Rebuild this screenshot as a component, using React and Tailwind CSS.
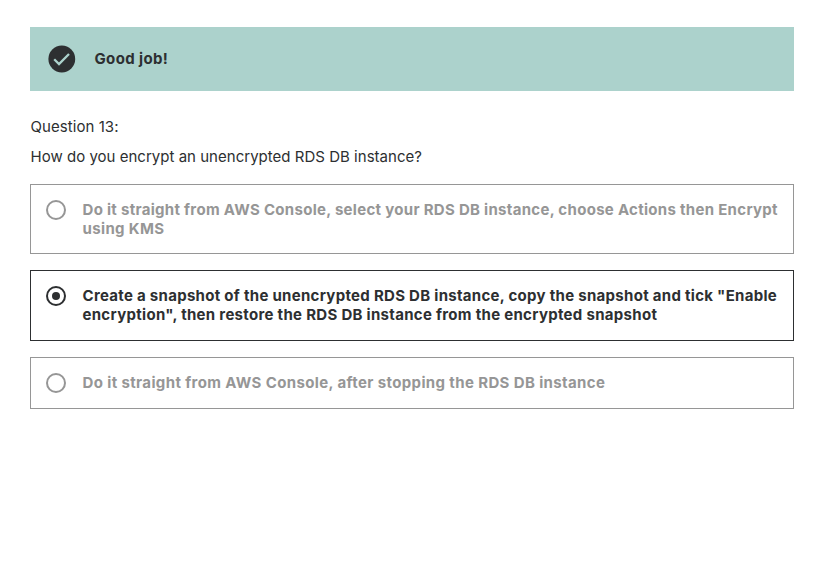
const OPTIONS = [
  {
    lines: [
      { text: "Do it straight from AWS Console, select your RDS DB instance, choose Actions then Encrypt", tracking: "tracking-[0.298px]" },
      { text: "using KMS", tracking: "tracking-[0.36px]" },
    ],
    selected: false,
  },
  {
    lines: [
      { text: 'Create a snapshot of the unencrypted RDS DB instance, copy the snapshot and tick "Enable', tracking: "tracking-[0.292px]" },
      { text: 'encryption", then restore the RDS DB instance from the encrypted snapshot', tracking: "tracking-[0.3px]" },
    ],
    selected: true,
  },
  {
    lines: [{ text: "Do it straight from AWS Console, after stopping the RDS DB instance", tracking: "tracking-[0.373px]" }],
    selected: false,
  },
];

function Radio({ selected }) {
  return (
    <svg className="h-5 w-5 shrink-0" viewBox="0 0 20 20" fill="none">
      <circle cx="10" cy="10" r="9" stroke="currentColor" strokeWidth="2" />
      {selected && <circle cx="10" cy="10" r="4" fill="currentColor" />}
    </svg>
  );
}

function Option({ lines, selected }) {
  const tone = selected ? "border-[#2d2f31] text-[#2d2f31]" : "border-[#969696] text-[#969696]";
  return (
    <div className={`flex gap-[16.5px] border px-[15px] pt-[15px] pb-[15.4px] ${tone}`}>
      <Radio selected={selected} />
      <div className="text-[15px] leading-[19px] font-bold whitespace-nowrap">
        {lines.map((line) => (
          <div key={line.text} className={line.tracking}>{line.text}</div>
        ))}
      </div>
    </div>
  );
}

export default function App() {
  return (
    <main className="min-h-screen bg-white px-[30px] pt-[27px] font-['Inter',sans-serif] text-[#2d2f31]">
      <div className="w-[764px]">
        <div className="flex h-16 items-center gap-[18.5px] bg-[#acd2cc] pl-[18px]">
          <svg className="h-7 w-7" viewBox="0 0 28 28" fill="none">
            <circle cx="13.8" cy="14" r="13.4" fill="#2d2f31" />
            <path d="M6.2 14.2l4.8 4.8L21 9" stroke="#acd2cc" strokeWidth="2.3" />
          </svg>
          <span className="text-[15px] font-bold tracking-[0.36px]">Good job!</span>
        </div>
        <p className="mt-[25px] pl-[0.5px] text-[15px] leading-[22px] tracking-[0.06px]">Question 13:</p>
        <p className="mt-2 pl-[0.5px] text-[15px] leading-[22px] tracking-[0.02px]">How do you encrypt an unencrypted RDS DB instance?</p>
        <div className="mt-4 flex flex-col gap-4">
          {OPTIONS.map((option) => (
            <Option key={option.lines[0].text} {...option} />
          ))}
        </div>
      </div>
    </main>
  );
}
